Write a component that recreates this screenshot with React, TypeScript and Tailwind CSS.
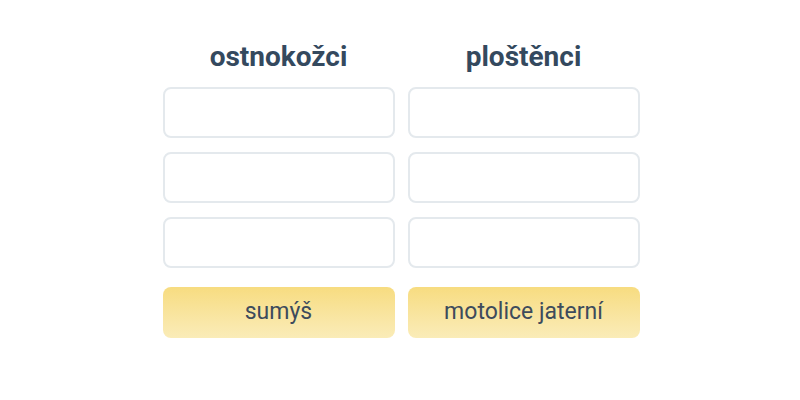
import React from "react";

const Column = ({ title, answer }: { title: string; answer: string }) => (
  <div className="flex w-[232px] flex-col">
    <h2 className="mb-[12px] h-[36px] text-center text-[28px] font-bold leading-[36px] text-[#34495e]">{title}</h2>
    <div className="flex flex-col gap-[14px]">
      <div className="h-[51px] rounded-[8px] border-2 border-[#e4e9ed] bg-white" />
      <div className="h-[51px] rounded-[8px] border-2 border-[#e4e9ed] bg-white" />
      <div className="h-[51px] rounded-[8px] border-2 border-[#e4e9ed] bg-white" />
    </div>
    <div className="mt-[19px] flex h-[51px] items-center justify-center rounded-[8px] bg-gradient-to-b from-[#f7dc80] to-[#faecb8] text-[23px] text-[#3d4b5c]">
      {answer}
    </div>
  </div>
);

export default function App() {
  return (
    <div className="flex h-[400px] w-[800px] justify-center bg-white pt-[39px]" style={{ fontFamily: "Roboto, sans-serif" }}>
      <div className="flex gap-[13px] pl-[2px]">
        <Column title="ostnokožci" answer="sumýš" />
        <Column title="ploštěnci" answer="motolice jaterní" />
      </div>
    </div>
  );
}
